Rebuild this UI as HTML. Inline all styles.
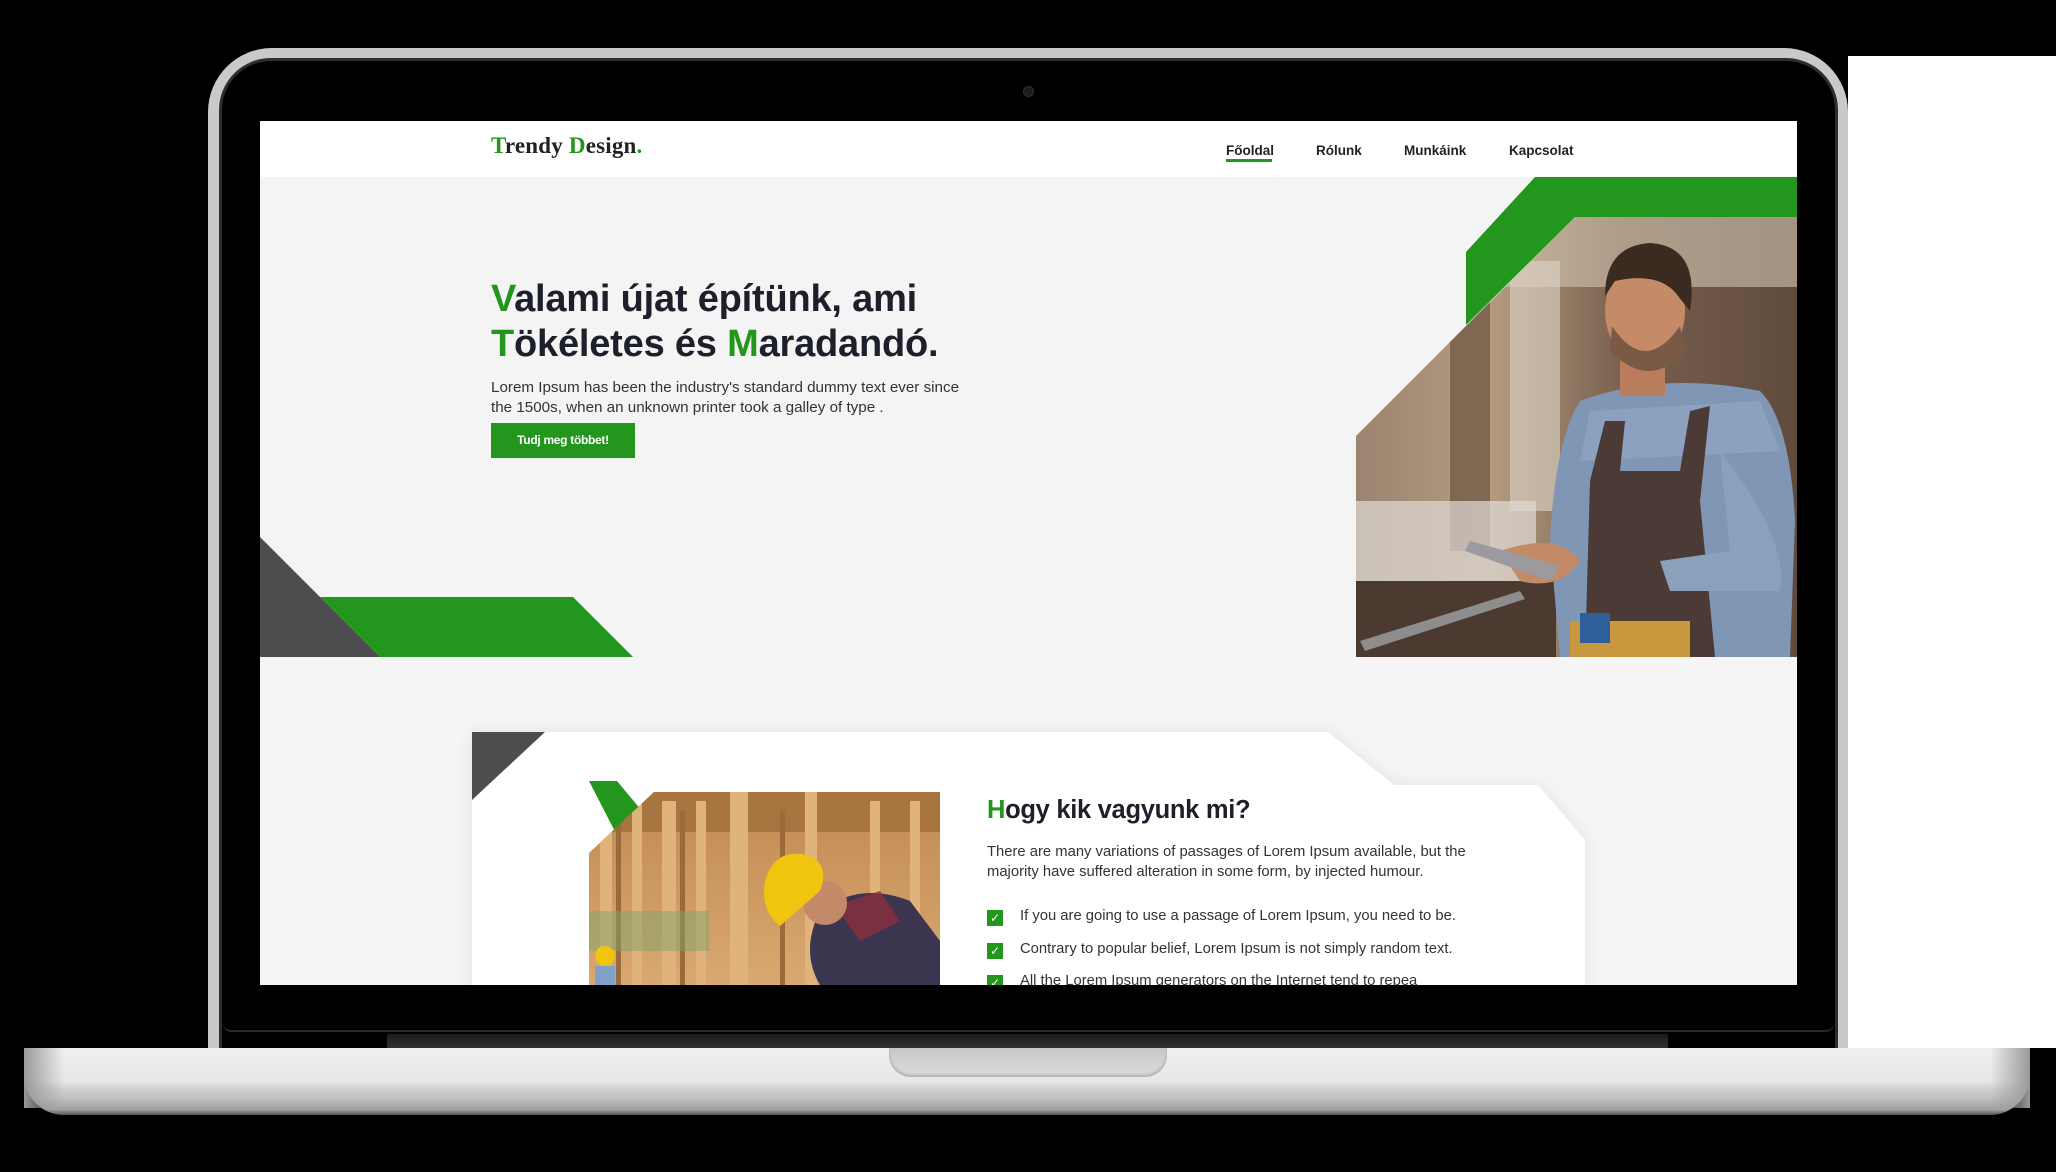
<!DOCTYPE html>
<html><head><meta charset="utf-8"><style>
*{margin:0;padding:0;box-sizing:border-box}
html,body{width:2056px;height:1172px;overflow:hidden;background:#000;position:relative;font-family:"Liberation Sans",sans-serif}
.abs{position:absolute}
#scr{position:absolute;left:260px;top:121px;width:1537px;height:864px;overflow:hidden;background:#f5f5f5}
.nav a{position:absolute;top:22px;font-size:13.5px;font-weight:600;color:#222;text-decoration:none}
.g{color:#23961e}
.cb{display:inline-block;width:16px;height:16px;background:#23961e;color:#fff;font-size:12px;line-height:16px;text-align:center;vertical-align:-2px;margin-right:17px}
</style></head><body>
<div class="abs" style="left:1848px;top:56px;width:208px;height:992px;background:#fff"></div>
<div class="abs" style="left:208px;top:48px;width:1640px;height:1010px;background:#c9c9cb;border-radius:64px 64px 0 0"></div>
<div class="abs" style="left:219px;top:58px;width:1619px;height:990px;background:#000;border:3px solid #2e2e30;border-bottom:none;border-radius:52px 52px 0 0"></div>
<div class="abs" style="left:222px;top:1022px;width:1613px;height:10px;border-bottom:2px solid #2a2a2a;border-radius:0 0 14px 14px"></div>
<div class="abs" style="left:387px;top:1034px;width:1281px;height:14px;background:linear-gradient(#1a1a1a,#333)"></div>
<div class="abs" style="left:1023px;top:86px;width:11px;height:11px;border-radius:50%;background:#1b1b22;border:1px solid #333"></div>
<div class="abs" style="left:24px;top:1048px;width:2006px;height:67px;border-radius:0 0 40px 40px;background:linear-gradient(#f0f0f0 0%,#e6e6e6 50%,#cfcfcf 62%,#c0c0c0 75%,#a0a0a0 92%,#555 100%)"></div>
<div class="abs" style="left:24px;top:1048px;width:40px;height:60px;background:linear-gradient(90deg,#9a9a9a,rgba(200,200,200,0))"></div>
<div class="abs" style="left:1990px;top:1048px;width:40px;height:60px;background:linear-gradient(270deg,#9a9a9a,rgba(200,200,200,0))"></div>
<div class="abs" style="left:889px;top:1048px;width:278px;height:29px;border-radius:0 0 22px 22px;background:linear-gradient(#c8c8c8,#dcdcdc);box-shadow:inset 0 -2px 3px #aaa"></div>

<div id="scr">
  <div class="abs" style="left:0;top:0;width:1537px;height:56px;background:#fff"></div>
  <div class="abs" style="left:231px;top:12px;font-family:'Liberation Serif',serif;font-weight:bold;font-size:23px;color:#222;letter-spacing:0.2px"><span class="g">T</span>rendy <span class="g">D</span>esign<span class="g">.</span></div>
  <div class="nav">
    <a style="left:966px">Főoldal</a>
    <a style="left:1056px">Rólunk</a>
    <a style="left:1144px">Munkáink</a>
    <a style="left:1249px">Kapcsolat</a>
  </div>
  <div class="abs" style="left:966px;top:38px;width:46px;height:3px;background:#23961e"></div>

  <div class="abs" style="left:0;top:56px;width:1537px;height:480px;background:#f4f4f4"></div>
  <svg class="abs" style="left:0;top:0" width="1537" height="864">
    <defs>
      <clipPath id="c1"><polygon points="1315,96 1537,96 1537,536 1096,536 1096,315"/></clipPath>
      <clipPath id="c2"><polygon points="394,671 680,671 680,864 329,864 329,732"/></clipPath>
      <linearGradient id="bg1" x1="0" y1="0" x2="1" y2="0">
        <stop offset="0" stop-color="#9a8470"/><stop offset="0.3" stop-color="#b59c80"/><stop offset="0.6" stop-color="#7a6150"/><stop offset="1" stop-color="#5f4a3d"/>
      </linearGradient>
      <linearGradient id="wood" x1="0" y1="0" x2="0" y2="1">
        <stop offset="0" stop-color="#c08a52"/><stop offset="1" stop-color="#d9a870"/>
      </linearGradient>
      <filter id="sh" x="-5%" y="-10%" width="110%" height="130%"><feDropShadow dx="0" dy="0" stdDeviation="8" flood-color="#000" flood-opacity="0.08"/></filter>
    </defs>
    <polygon points="0,416 120,536 0,536" fill="#4d4d4f"/>
    <polygon points="60,476 313,476 373,536 120,536" fill="#23961e"/>
    <polygon points="1275,56 1537,56 1537,96 1315,96 1206,204 1206,131" fill="#23961e"/>
    <g clip-path="url(#c1)">
      <rect x="1096" y="96" width="441" height="440" fill="url(#bg1)"/>
      <rect x="1096" y="96" width="441" height="70" fill="#d2c4b0" opacity="0.6"/>
      <rect x="1190" y="170" width="40" height="260" fill="#6b5240" opacity="0.7"/>
      <rect x="1250" y="140" width="50" height="250" fill="#e0d6c8" opacity="0.6"/>
      <rect x="1096" y="380" width="180" height="80" fill="#e0dcd7" opacity="0.7"/>
      <rect x="1096" y="460" width="200" height="76" fill="#4a3a30"/>
      <polygon points="1100,520 1260,470 1265,478 1105,530" fill="#8d8d8d"/>
      <path d="M1320,280 Q1400,250 1500,270 Q1530,300 1535,400 L1530,536 L1300,536 L1290,420 Q1295,320 1320,280Z" fill="#7f97b5"/>
      <path d="M1330,290 L1500,280 L1520,330 L1320,340Z" fill="#92a9c6" opacity="0.6"/>
      <path d="M1345,300 L1365,300 L1360,350 L1420,350 L1430,290 L1450,285 L1440,380 L1455,536 L1325,536 L1330,360Z" fill="#4b3a35"/>
      <rect x="1360" y="225" width="45" height="50" fill="#b97d5c"/>
      <ellipse cx="1385" cy="190" rx="40" ry="52" fill="#c58a67"/>
      <path d="M1345,175 Q1345,125 1390,122 Q1440,125 1430,190 L1418,175 Q1400,150 1355,160Z" fill="#3a2a20"/>
      <path d="M1352,205 Q1385,255 1420,205 L1425,230 Q1390,270 1350,230Z" fill="#7a5a44"/>
      <path d="M1240,430 Q1300,410 1320,440 Q1300,470 1260,460Z" fill="#c48a66"/>
      <polygon points="1210,420 1300,445 1290,460 1205,430" fill="#9a9a9f"/>
      <path d="M1460,330 Q1530,420 1520,470 L1410,470 L1400,440 L1470,430Z" fill="#8aa0bb"/>
      <rect x="1310" y="500" width="120" height="36" fill="#c7983e"/>
      <rect x="1320" y="492" width="30" height="30" fill="#2f5f9a"/>
    </g>

    <polygon filter="url(#sh)" points="212,611 1068,611 1134,664 1278,664 1325,719 1325,900 212,900" fill="#fff"/>
    <polygon points="212,611 285,611 212,679" fill="#4d4d4f"/>
    <polygon points="329,660 357,660 392,702 365,730" fill="#23961e"/>
    <g clip-path="url(#c2)">
      <rect x="329" y="671" width="351" height="193" fill="url(#wood)"/>
      <rect x="329" y="671" width="351" height="40" fill="#a8743f"/>
      <g fill="#e0b27c">
        <rect x="340" y="680" width="12" height="184"/><rect x="372" y="680" width="10" height="184"/>
        <rect x="402" y="680" width="14" height="184"/><rect x="436" y="680" width="10" height="184"/>
        <rect x="470" y="671" width="18" height="193"/><rect x="545" y="671" width="12" height="193"/>
        <rect x="610" y="680" width="10" height="184"/><rect x="650" y="680" width="10" height="184"/>
      </g>
      <g fill="#9b6a3a"><rect x="356" y="690" width="5" height="174"/><rect x="420" y="690" width="5" height="174"/><rect x="520" y="690" width="5" height="174"/></g>
      <rect x="329" y="790" width="120" height="40" fill="#7fa56a" opacity="0.5"/>
      <path d="M560,790 Q600,760 650,780 L680,820 L680,864 L560,864 Q540,830 560,790Z" fill="#3b3550"/>
      <path d="M575,785 L620,770 L640,800 L600,820Z" fill="#8c2f3f" opacity="0.8"/>
      <ellipse cx="565" cy="782" rx="22" ry="22" fill="#c28a68"/>
      <path d="M505,760 Q515,725 550,735 Q570,745 560,770 L520,805 Q500,790 505,760Z" fill="#f1c40f"/>
      <circle cx="345" cy="835" r="10" fill="#f1c40f"/>
      <rect x="335" y="845" width="20" height="19" fill="#7fa1c8"/>
    </g>
  </svg>

  <div class="abs" style="left:231px;top:156px;font-size:38px;line-height:45px;font-weight:600;color:#1d1f2b;letter-spacing:-0.2px;white-space:nowrap"><span class="g">V</span>alami újat építünk, ami<br><span class="g">T</span>ökéletes és <span class="g">M</span>aradandó.</div>
  <div class="abs" style="left:231px;top:257px;font-size:15.2px;line-height:20px;color:#333;white-space:nowrap">Lorem Ipsum has been the industry's standard dummy text ever since<br>the 1500s, when an unknown printer took a galley of type .</div>
  <div class="abs" style="left:231px;top:302px;width:144px;height:35px;background:#23961e;color:#fff;font-size:12px;font-weight:bold;text-align:center;line-height:35px;letter-spacing:-0.3px">Tudj meg többet!</div>

  <div class="abs" style="left:727px;top:674px;font-size:25.5px;line-height:30px;font-weight:600;color:#1d1f2b;white-space:nowrap;letter-spacing:-0.3px"><span class="g">H</span>ogy kik vagyunk mi?</div>
  <div class="abs" style="left:727px;top:721px;font-size:14.8px;line-height:20px;color:#333;white-space:nowrap">There are many variations of passages of Lorem Ipsum available, but the<br>majority have suffered alteration in some form, by injected humour.</div>
  <div class="abs" style="left:727px;top:785px;font-size:14.8px;color:#333;white-space:nowrap;line-height:20px">
    <div style="position:absolute;top:0"><span class="cb">✓</span>If you are going to use a passage of Lorem Ipsum, you need to be.</div>
    <div style="position:absolute;top:33px"><span class="cb">✓</span>Contrary to popular belief, Lorem Ipsum is not simply random text.</div>
    <div style="position:absolute;top:65px"><span class="cb">✓</span>All the Lorem Ipsum generators on the Internet tend to repea</div>
  </div>
</div>
</body></html>
